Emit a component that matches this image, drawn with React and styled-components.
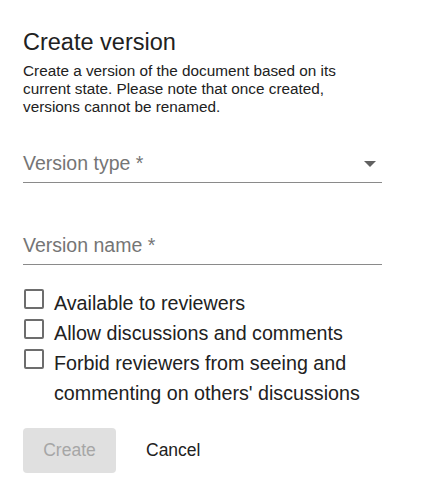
import React from "react";
import styled, { createGlobalStyle } from "styled-components";

const G = createGlobalStyle`
  body { margin: 0; background: #fff; font-family: "Liberation Sans", Arial, sans-serif; color: #212121; }
`;
const Wrap = styled.div`padding: 28px 43px 0 23px; width: 359px;`;
const Title = styled.h1`font-size: 23.5px; font-weight: 400; margin: 0 0 6px; line-height: 28px;`;
const Desc = styled.p`font-size: 15.3px; line-height: 18px; margin: 0; color: #212121; width: 340px;`;
const Field = styled.div`
  margin-top: ${p => p.$mt}px; height: 34px; border-bottom: 1px solid #8a8a8a;
  display: flex; align-items: center; justify-content: space-between;
  font-size: 19.5px; color: #757575; padding-bottom: 4px; box-sizing: border-box;
`;
const Caret = styled.span`width:0;height:0;border-left:6px solid transparent;border-right:6px solid transparent;border-top:6px solid #616161;margin-right:6px;`;
const Checks = styled.div`margin-top: 23px; display: flex; flex-direction: column;`;
const Row = styled.label`display: flex; align-items: flex-start; gap: 10px; font-size: 19.7px; line-height: 30px; color: #212121;`;
const Box = styled.span`flex: none; width: 16px; height: 16px; border: 2px solid #6d6d6d; border-radius: 2px; margin: 1px 0 0 1px;`;
const Actions = styled.div`margin-top: 20px; display: flex; align-items: center; gap: 30px;`;
const Btn = styled.button`
  font: inherit; font-size: 17.5px; border: none; border-radius: 4px; height: 45px;
  padding: 0 ${p => p.$primary ? 10 : 0}px; width: ${p => p.$primary ? "93px" : "auto"};
  background: ${p => p.$primary ? "#e0e0e0" : "transparent"}; color: ${p => p.$primary ? "#a6a6a6" : "#212121"};
`;

export default function App() {
  return (
    <Wrap>
      <G />
      <Title>Create version</Title>
      <Desc>Create a version of the document based on its current state. Please note that once created, versions cannot be renamed.</Desc>
      <Field $mt={33}>Version type *<Caret /></Field>
      <Field $mt={48}>Version name *</Field>
      <Checks>
        <Row><Box />Available to reviewers</Row>
        <Row><Box />Allow discussions and comments</Row>
        <Row><Box />Forbid reviewers from seeing and commenting on others' discussions</Row>
      </Checks>
      <Actions>
        <Btn $primary disabled>Create</Btn>
        <Btn>Cancel</Btn>
      </Actions>
    </Wrap>
  );
}
